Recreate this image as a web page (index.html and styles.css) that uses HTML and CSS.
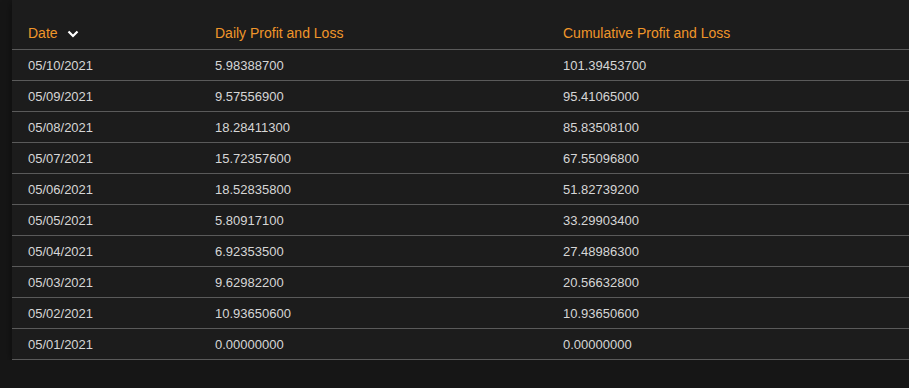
FILE: index.html
```html
<!DOCTYPE html>
<html lang="en">
<head>
  <meta charset="UTF-8" />
  <title>Profit and Loss</title>
  <link rel="stylesheet" href="styles.css">
</head>
<body>
  <div class="panel">
    <table class="pnl-table">
      <thead>
        <tr>
          <th class="col-date">Date <svg class="sort-icon" width="12" height="8" viewBox="0 0 12 8"><path d="M1.5 1.5 L6 6 L10.5 1.5" fill="none" stroke="#fff" stroke-width="2.2"/></svg></th>
          <th class="col-daily">Daily Profit and Loss</th>
          <th>Cumulative Profit and Loss</th>
        </tr>
      </thead>
      <tbody>
        <tr><td>05/10/2021</td><td>5.98388700</td><td>101.39453700</td></tr>
        <tr><td>05/09/2021</td><td>9.57556900</td><td>95.41065000</td></tr>
        <tr><td>05/08/2021</td><td>18.28411300</td><td>85.83508100</td></tr>
        <tr><td>05/07/2021</td><td>15.72357600</td><td>67.55096800</td></tr>
        <tr><td>05/06/2021</td><td>18.52835800</td><td>51.82739200</td></tr>
        <tr><td>05/05/2021</td><td>5.80917100</td><td>33.29903400</td></tr>
        <tr><td>05/04/2021</td><td>6.92353500</td><td>27.48986300</td></tr>
        <tr><td>05/03/2021</td><td>9.62982200</td><td>20.56632800</td></tr>
        <tr><td>05/02/2021</td><td>10.93650600</td><td>10.93650600</td></tr>
        <tr><td>05/01/2021</td><td>0.00000000</td><td>0.00000000</td></tr>
      </tbody>
    </table>
  </div>
</body>
</html>
```
FILE: styles.css
```css
body {
  margin: 0;
  background: #161616;
  font-family: "Liberation Sans", Arial, sans-serif;
  overflow: hidden;
}

/* Card */
.panel {
  background: #1c1c1c;
  margin-left: 12px;
  width: 920px;
  padding-top: 17px;
  box-shadow: 0 2px 8px rgba(0, 0, 0, 0.5);
}

.pnl-table {
  width: 100%;
  border-collapse: collapse;
}

.pnl-table th {
  color: #f0962a;
  font-weight: normal;
  font-size: 14px;
  text-align: left;
  height: 32px;
  padding: 0 0 0 16px;
  border-bottom: 1px solid #5a5a5a;
}

.pnl-table th.col-date {
  width: 171px;
}

.pnl-table th.col-daily {
  width: 332px;
}

.sort-icon {
  margin-left: 6px;
  vertical-align: middle;
}

.pnl-table td {
  color: #d6d6d6;
  font-size: 13px;
  height: 30px;
  padding: 0 0 0 16px;
  border-bottom: 1px solid #5a5a5a;
}
```
